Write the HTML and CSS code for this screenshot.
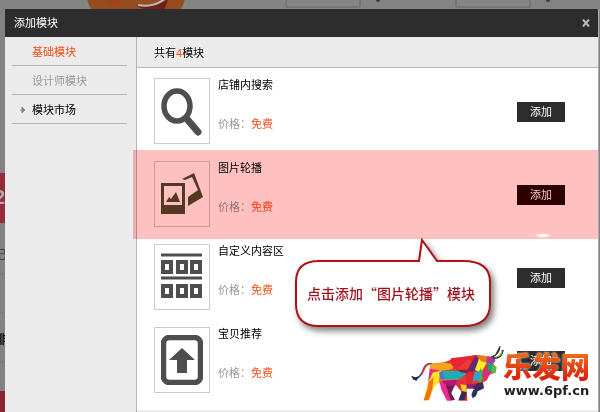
FILE: index.html
```html
<!doctype html>
<html lang="zh-CN">
  <head>
    <meta charset="UTF-8" />
    <meta name="viewport" content="width=device-width, initial-scale=1.0" />
    <title>添加模块</title>
    <link rel="stylesheet" href="styles.css">
  </head>
  <body>
    <!-- dimmed page behind the dialog -->
    <svg class="backdrop" width="600" height="412" aria-hidden="true">
      <ellipse cx="136" cy="-4" rx="49" ry="32" fill="#974c20" />
      <ellipse cx="115" cy="0" rx="7" ry="5" fill="#a3401d" />
      <path d="M136 5Q154 10 169-2L164 10H150Q140 9 136 5Z" fill="#712019" />
      <path d="M138 5Q154 8 166-2" fill="none" stroke="#b9b9b9" stroke-width="2" />
      <path d="M286 0V7H360V0M456 0V7H530V0" fill="#858585" stroke="#6d6967" stroke-width="1" />
      <circle cx="378" cy="0" r="2" fill="#54302e" />
      <circle cx="548" cy="0" r="2" fill="#54302e" />
      <rect y="173" width="5" height="50" fill="#942b3d" />
      <text class="backdrop-count" x="-6" y="204">2</text>
      <text class="backdrop-text" x="-6" y="259">记</text>
      <path d="M0 274H5M0 313H5M0 362H5" stroke="#777" />
      <text class="backdrop-text dark" x="-6" y="344">排</text>
      <rect y="391" width="5" height="21" fill="#8c2438" />
    </svg>

    <div class="dialog">
      <div class="dialog-header">
        <h1>添加模块</h1>
        <button class="close" type="button" aria-label="关闭">
          <svg width="8" height="8" viewBox="0 0 8 8"><path d="M1 0.5L7 7.5M7 0.5L1 7.5" stroke="#bbb" stroke-width="2" /></svg>
        </button>
      </div>

      <div class="dialog-body">
        <nav class="sidebar">
          <a class="active" href="#">基础模块</a>
          <a class="disabled" href="#">设计师模块</a>
          <a class="market" href="#">模块市场
            <svg class="arrow" width="6" height="8" viewBox="0 0 6 8"><path d="M0 4H3M2 1V7L5 4Z" stroke="#888" stroke-width="1" fill="#888" stroke-linejoin="bevel" /></svg>
          </a>
        </nav>

        <main class="content">
          <div class="summary">共有<span class="count">4</span>模块</div>

          <div class="module-list">
            <div class="module">
              <div class="thumb">
                <svg width="42" height="50" viewBox="0 0 42 50" fill="none" stroke="#4e4e4e">
                  <ellipse cx="16" cy="20" rx="13" ry="15" stroke-width="5.5" />
                  <path d="M26 33L37 46" stroke-width="7" stroke-linecap="round" />
                </svg>
              </div>
              <div class="info">
                <h2>店铺内搜索</h2>
                <p>价格：<span class="free">免费</span></p>
              </div>
              <button class="add" type="button">添加</button>
            </div>

            <div class="module selected">
              <div class="thumb">
                <svg width="42" height="50" viewBox="0 0 42 50">
                  <path fill-rule="evenodd" d="M0 14H24V45H0ZM3 17V36H21V17Z" />
                  <path d="M5 33L8 28L10 30L15 23L19 33Z" />
                  <path d="M21 10L33 4L42 28L27 37V28L37 21L31 8L24 11Z" />
                </svg>
              </div>
              <div class="info">
                <h2>图片轮播</h2>
                <p>价格：<span class="free">免费</span></p>
              </div>
              <button class="add" type="button">添加</button>
            </div>

            <div class="module">
              <div class="thumb">
                <svg width="42" height="50" viewBox="0 0 42 50" fill="none" stroke="#4e4e4e">
                  <path d="M0 3H41M0 26H41" stroke-width="3" />
                  <path d="M2 10H10V20H2ZM17 10H25V20H17ZM31 10H39V20H31ZM2 34H10V44H2ZM17 34H25V44H17ZM31 34H39V44H31Z" stroke-width="4" />
                </svg>
              </div>
              <div class="info">
                <h2>自定义内容区</h2>
                <p>价格：<span class="free">免费</span></p>
              </div>
              <button class="add" type="button">添加</button>
            </div>

            <div class="module">
              <div class="thumb">
                <svg width="42" height="50" viewBox="0 0 42 50">
                  <rect x="2.5" y="2.5" width="37" height="45" rx="6" fill="none" stroke="#4e4e4e" stroke-width="5.5" />
                  <path d="M21 13L34 25H26V38H16V25H8Z" fill="#4e4e4e" />
                </svg>
              </div>
              <div class="info">
                <h2>宝贝推荐</h2>
                <p>价格：<span class="free">免费</span></p>
              </div>
              <button class="add" type="button">添加</button>
            </div>
          </div>
        </main>
      </div>
    </div>

    <!-- hint balloon -->
    <div class="callout">
      <svg width="206" height="100" viewBox="0 0 206 100" aria-hidden="true">
        <path d="M22 23H124L127 2L142 23H168Q195 23 195 44V66Q195 88 168 88H24Q1 88 1 66V44Q1 23 24 23Z" fill="#fff" stroke="#b01116" stroke-width="2" />
      </svg>
      <p>点击添加“图片轮播”模块</p>
    </div>
    <div class="glow"></div>

    <!-- site logo -->
    <div class="watermark">
      <svg class="bull" width="100" height="62" viewBox="0 0 300 186" aria-hidden="true">
        <path d="M75 66Q58 62 51 78Q43 104 25 112" fill="none" stroke="#18577b" stroke-width="5" />
        <path d="M70 66Q58 65 51 82L43 98" fill="none" stroke="#e53542" stroke-width="5" />
        <path d="M12 101L25 106L35 103L29 116L19 113Z" fill="#302453" />
        <path d="M73 65L112 61L143 49L185 43L209 39L239 43L265 44L259 65L268 78L265 92L248 98L238 116L224 123L202 130L176 130L145 127L126 126L96 122L76 99L68 79Z" fill="#e83730" />
        <path d="M73 65L112 62L143 67L136 82L78 91L68 80Z" fill="#f4a51c" />
        <path d="M68 80L103 86L78 110L63 123Z" fill="#ed278d" />
        <path d="M78 91L103 86L97 120L82 134L67 173L49 176L59 136L64 119Z" fill="#ffe223" />
        <path d="M65 120L80 106L76 141L65 175H50L61 143Z" fill="#ed721f" />
        <path d="M103 86L159 87L181 93L155 114L105 113Z" fill="#1badba" />
        <path d="M97 91L109 88L111 111L98 116Z" fill="#4c7bbb" />
        <path d="M131 49L185 43L209 39L199 66L148 82L134 70Z" fill="#ea2432" />
        <path d="M148 81L211 59L181 94L160 91Z" fill="#88243a" />
        <path d="M181 54L211 59L194 83L148 83Z" fill="#ee3835" />
        <path d="M206 40L224 65L196 92L181 83Z" fill="#692773" />
        <path d="M220 40L240 61L222 93L204 83Z" fill="#fff02b" />
        <path d="M209 39L240 43L239 62L222 58Z" fill="#ed7a1c" />
        <path d="M222 78L231 99L221 124L203 109Z" fill="#48b74b" />
        <path d="M198 91L222 87L218 112L198 118Z" fill="#2aa6d2" />
        <path d="M176 94L204 88L194 126L178 132Z" fill="#e2292f" />
        <path d="M94 112L154 112L172 132L112 129Z" fill="#fb6b28" />
        <path d="M103 116L154 113L140 138L112 128Z" fill="#ae187c" />
        <path d="M112 127L141 134L133 154L144 173L131 176L118 148Z" fill="#741a50" />
        <path d="M98 120L116 127L131 176H120L103 143Z" fill="#ef2891" />
        <path d="M155 112L178 126L181 176H154L164 150L145 127Z" fill="#e32b35" />
        <path d="M160 127L178 129L179 151L165 147Z" fill="#ffcf1b" />
        <path d="M165 147L179 151L173 174H155Z" fill="#342c57" />
        <path d="M179 127L218 127L206 140L179 140Z" fill="#872271" />
        <path d="M209 124L228 121L231 139L214 147L199 141Z" fill="#412662" />
        <path d="M199 143L215 140L207 162L197 169L193 158Z" fill="#263658" />
        <path d="M240 46L263 44L265 58L251 71L238 62Z" fill="#b4399a" />
        <path d="M240 62L257 66L266 80L257 92L243 83Z" fill="#12a77c" />
        <path d="M235 78L249 89L240 113L223 102Z" fill="#da2d7e" />
        <path d="M256 68L269 74L266 91L252 96Z" fill="#55b94a" />
        <path d="M253 45Q277 40 279 13L266 38Z" fill="#47315e" stroke="#2b2842" stroke-width="3" />
        <path d="M258 48Q282 51 288 24" fill="none" stroke="#1e4053" stroke-width="6" />
        <path d="M262 45Q279 47 286 28" fill="none" stroke="#dfc721" stroke-width="3" />
      </svg>
      <div class="brand">
        <strong>乐发网</strong>
        <span>www.6pf.cn</span>
      </div>
    </div>
  </body>
</html>
```
FILE: styles.css
```css
:root {
  --dark: #2d2d2d;
  --panel: #ebebeb;
  --line: #b5b5b5;
  --orange: #f0501a;
  --muted: #999;
}

* {
  box-sizing: border-box;
}

body {
  margin: 0;
  min-height: 100vh;
  display: flex;
  position: relative;
  overflow: hidden;
  background: #838383;
  color: #000;
  font-family: "Liberation Sans", "Noto Sans CJK SC", sans-serif;
  font-size: 11px;
  line-height: 14px;
}

h1,
h2,
p {
  margin: 0;
  font-size: inherit;
  font-weight: normal;
}

button {
  border: 0;
  padding: 0;
  font: inherit;
  cursor: pointer;
}

.backdrop {
  position: absolute;
  top: 0;
  left: 0;
}

.backdrop-count {
  font-size: 20px;
  font-weight: bold;
  fill: #aaa;
}

.backdrop-text {
  font-size: 12px;
  fill: #444;
}

.backdrop-text.dark {
  font-weight: bold;
  fill: #111;
}

/* Dialog */
.dialog {
  position: relative;
  flex: 1;
  display: flex;
  flex-direction: column;
  margin: 9px 1px 0 5px;
  background: var(--panel);
  border-right: 1px solid #aaa;
}

.dialog-header {
  display: flex;
  align-items: center;
  justify-content: space-between;
  height: 28px;
  padding: 0 8px 0 9px;
  background: var(--dark);
  color: #fff;
}

.close {
  display: flex;
  background: none;
}

.dialog-body {
  flex: 1;
  display: flex;
}

.sidebar {
  width: 132px;
  padding: 0 9px 0 7px;
  border-right: 1px solid var(--line);
}

.sidebar a {
  display: block;
  position: relative;
  padding: 8px 0 6px 20px;
  border-bottom: 1px solid var(--line);
  color: #000;
  text-decoration: none;
}

.sidebar .active {
  color: var(--orange);
}

.sidebar .disabled {
  color: var(--muted);
}

.arrow {
  position: absolute;
  left: 8px;
  top: 11px;
}

.content {
  flex: 1;
}

.summary {
  height: 31px;
  padding: 9px 17px 0;
  border-bottom: 1px solid var(--line);
}

.count,
.free {
  color: var(--orange);
}

.module-list {
  padding-top: 10px;
  background: #fff;
}

/* Module rows */
.module {
  display: flex;
  gap: 8px;
  height: 83px;
  padding: 0 33px 0 17px;
  position: relative;
}

.thumb {
  display: flex;
  align-items: center;
  justify-content: center;
  width: 56px;
  height: 66px;
  border: 1px solid #ccc;
}

.info {
  flex: 1;
}

.info p {
  margin-top: 25px;
  color: var(--muted);
}

.add {
  width: 48px;
  height: 20px;
  margin-top: 24px;
  background: var(--dark);
  color: #fff;
}

.module.selected::after {
  content: "";
  position: absolute;
  top: -11px;
  right: 0;
  bottom: 5px;
  left: -4px;
  background: #ffc0c0;
  mix-blend-mode: multiply;
}

.selected .thumb path {
  fill: #544a30;
}

.selected .add {
  background: #2d0000;
}

/* Balloon */
.callout {
  position: absolute;
  top: 238px;
  left: 295px;
  filter: drop-shadow(3px 4px 3px rgba(0, 0, 0, 0.5));
}

.callout svg {
  display: block;
}

.callout p {
  position: absolute;
  top: 45px;
  left: 12px;
  color: #9e101c;
  font-family: "Noto Sans CJK SC", sans-serif;
  font-size: 14px;
  font-weight: 500;
  line-height: 20px;
  white-space: nowrap;
}

.glow {
  position: absolute;
  top: 233px;
  right: 48px;
  width: 18px;
  height: 5px;
  border-radius: 50%;
  background: radial-gradient(closest-side, #fff 30%, rgba(255, 255, 255, 0));
}

/* Logo */
.watermark {
  position: absolute;
  top: 342px;
  right: 10px;
  display: flex;
}

.brand {
  display: flex;
  flex-direction: column;
  align-items: center;
  padding-top: 7px;
  margin-left: -4px;
}

.brand strong {
  font-family: "Noto Sans CJK SC", sans-serif;
  font-size: 29px;
  font-weight: 900;
  line-height: 32px;
  background: linear-gradient(#f27a1c, #d91a0c);
  -webkit-background-clip: text;
  background-clip: text;
  color: transparent;
  filter: drop-shadow(0 0 1px #fff);
}

.brand span {
  color: #222;
  font-family: "DejaVu Sans", sans-serif;
  font-size: 13px;
  font-weight: bold;
  line-height: 20px;
}
```
